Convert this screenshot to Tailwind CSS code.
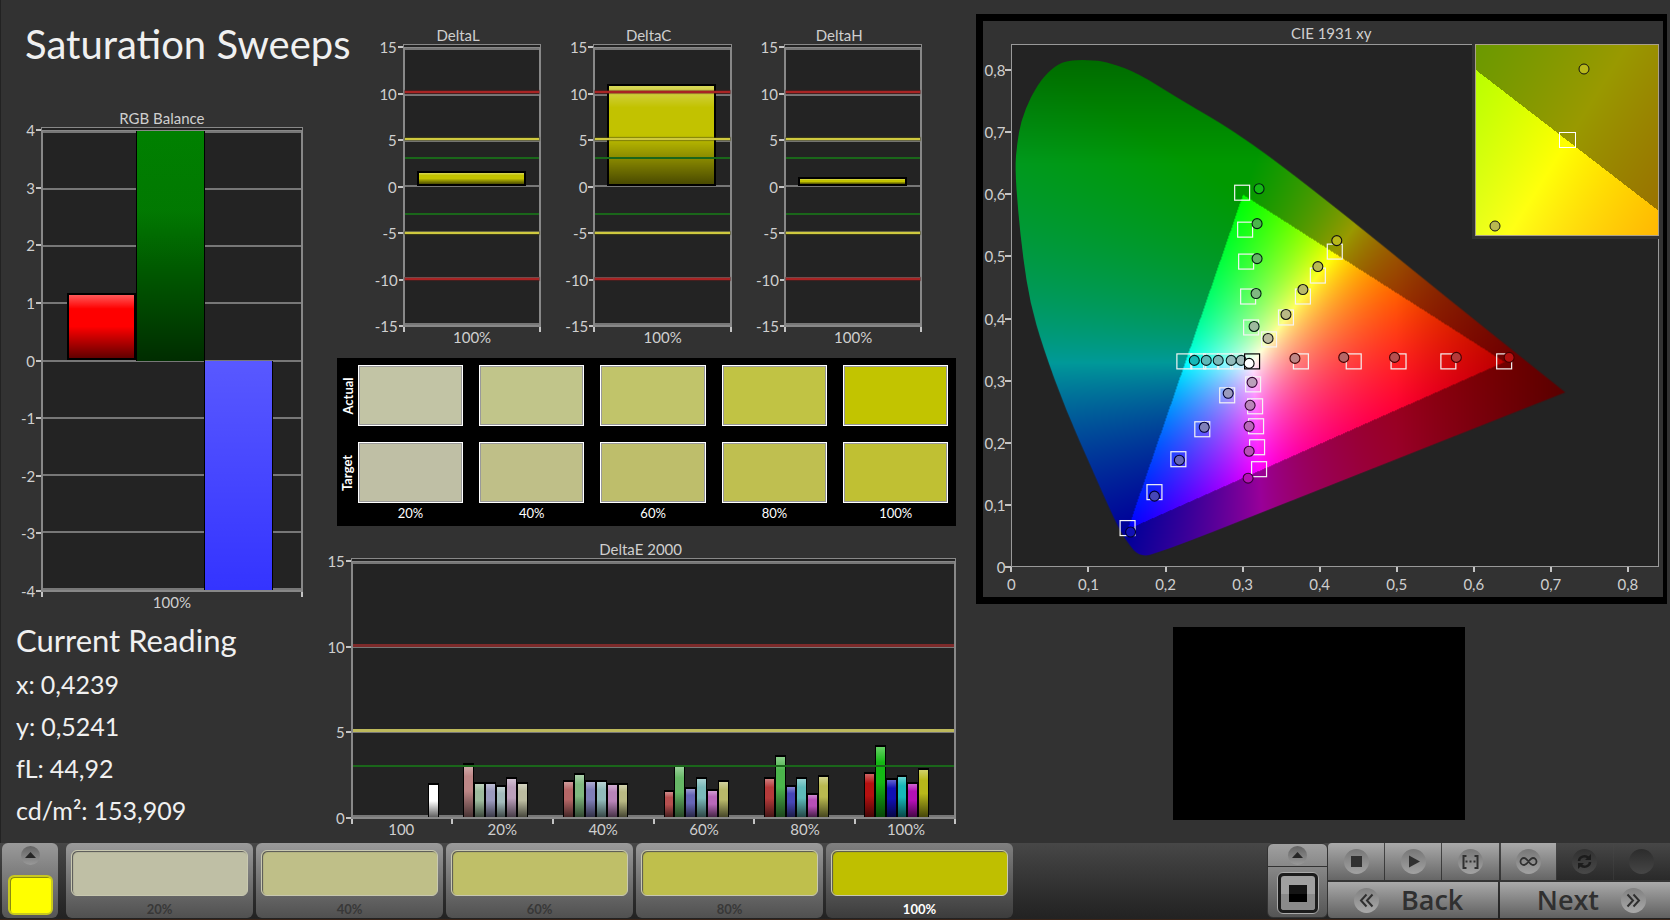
<!DOCTYPE html>
<html lang="en">

<head>
    <meta charset="UTF-8" />
    <meta name="viewport" content="width=device-width, initial-scale=1.0" />
    <title>Saturation Sweeps</title>
    <script src="https://cdn.jsdelivr.net/npm/@tailwindcss/browser@4"></script>
</head>

<body class="bg-[#323232] min-h-screen flex flex-col font-[Lato,sans-serif] text-[15px] leading-5 text-[#cfcfcf]">
    <main class="flex-1 grid grid-cols-[minmax(0,324fr)_minmax(0,632fr)_minmax(0,714fr)] border-l border-[#222]">

        <!-- left: title, rgb balance, reading -->
        <section class="flex flex-col">
            <h1 class="pt-[19px] pl-6 text-[40px] leading-[50px] text-[#f0f0f0] whitespace-nowrap">Saturation Sweeps</h1>
            <div class="mt-10 pl-5 pr-[22px]" id="rgbBalance"></div>
            <div class="pl-[15px] mt-2 text-[#f0f0f0]">
                <h2 class="text-[31px] leading-[38px]">Current Reading</h2>
                <dl class="mt-1 text-[25px] leading-[42px]">
                    <div class="flex gap-1.5"><dt>x:</dt><dd>0,4239</dd></div>
                    <div class="flex gap-1.5"><dt>y:</dt><dd>0,5241</dd></div>
                    <div class="flex gap-1.5"><dt>fL:</dt><dd>44,92</dd></div>
                    <div class="flex gap-1.5"><dt>cd/m²:</dt><dd>153,909</dd></div>
                </dl>
            </div>
        </section>

        <!-- middle: delta charts, swatches, deltaE -->
        <section class="flex flex-col">
            <div class="pt-[26px] pl-[50px] pr-[34px] grid grid-cols-3 gap-6">
                <div id="deltaL"></div>
                <div id="deltaC"></div>
                <div id="deltaH"></div>
            </div>

            <div class="mt-2.5 ml-3 bg-black pt-[7px] pr-2 pb-[3px] grid grid-cols-[21px_1fr] text-white text-[13px]">
                <div class="h-[61px] flex items-center justify-center"><span class="-rotate-90 font-bold">Actual</span></div>
                <div class="grid grid-cols-5 gap-4" id="actual"></div>
                <div class="h-[61px] mt-4 flex items-center justify-center"><span class="-rotate-90 font-bold">Target</span></div>
                <div class="grid grid-cols-5 gap-4 mt-4" id="target"></div>
                <div></div>
                <div class="grid grid-cols-5 gap-4 text-center">
                    <span>20%</span><span>40%</span><span>60%</span><span>80%</span><span>100%</span>
                </div>
            </div>

            <div class="mt-3.5" id="deltaE"></div>
        </section>

        <!-- right: chromaticity diagram -->
        <section class="flex flex-col pl-5 pr-[3px] pt-3.5">
            <div class="border-[7px] border-r-4 border-black pr-1">
                <h3 class="h-[23px] pt-0.5 pl-5 text-center">CIE 1931 xy</h3>
                <div class="grid grid-cols-[28px_1fr]">
                    <div class="pt-[26px] flex flex-col justify-between" id="cieY"></div>
                    <div class="relative h-[523px] bg-[#232323] border border-[#999]">
                        <canvas id="cie" width="648" height="522" class="w-full h-full"></canvas>
                        <svg id="marks" viewBox="0 0 648 522" preserveAspectRatio="none" class="absolute inset-0 w-full h-full"></svg>
                        <div class="absolute -top-px -right-px w-[187px] h-[195px] bg-[#323232] pl-[3px] pb-[3px]">
                            <div class="relative w-full h-full border border-[#aaa08a]">
                                <canvas id="inset" width="182" height="190" class="w-full h-full"></canvas>
                                <svg viewBox="0 0 182 190" class="absolute inset-0 w-full h-full">
                                    <rect x="83.5" y="87.5" width="16" height="15" fill="none" stroke="#fff" />
                                    <circle cx="108" cy="24" r="5" fill="#b8b81a" stroke="#111" />
                                    <circle cx="19" cy="181" r="5" fill="#b9b950" stroke="#111" />
                                </svg>
                            </div>
                        </div>
                    </div>
                </div>
                <div class="ml-[28px] pr-[31px] h-[30px] flex justify-between" id="cieX"></div>
            </div>
            <div class="mt-[23px] ml-[197px] w-[292px] h-[193px] bg-black"></div>
        </section>
    </main>

    <footer class="h-[77px] pl-0.5 pb-px flex bg-linear-to-b from-[#474747] to-[#222] border-b border-[#3a2418]">
        <div class="w-14 rounded-md bg-linear-to-b from-[#9a9a9a] to-[#555] flex flex-col items-center">
            <button aria-label="Expand colors" class="mt-[3px] w-[19px] h-[19px] rounded-full bg-linear-to-b from-[#636363] to-[#999]">
                <svg viewBox="0 0 19 19" class="w-full h-full"><path d="M4 12 9.500 6 15 12Z" fill="#262626" /></svg>
            </button>
            <button aria-label="Yellow" class="mt-2.5 w-[45px] h-10 rounded-md bg-[#ff0] border-2 border-[#c8c820] shadow-[inset_1px_1px_0_#8a8a10]"></button>
        </div>

        <div class="ml-2 flex gap-[3px]" id="steps"></div>

        <div class="ml-auto w-[61px] rounded-md bg-linear-to-b from-[#a0a0a0] to-[#555] border border-[#333] flex flex-col items-center">
            <button aria-label="Expand window" class="w-full h-[23px] flex justify-center items-center border-b border-[#333]">
                <svg viewBox="0 0 19 19" class="w-[19px] h-[19px] rounded-full bg-linear-to-b from-[#636363] to-[#999]"><path d="M4 12 9.500 6 15 12Z" fill="#262626" /></svg>
            </button>
            <button aria-label="Pattern window" class="mt-[5px] w-[42px] h-[42px] rounded-md border border-[#aaa] bg-[#1c1c1c] p-[3px]">
                <svg viewBox="0 0 34 34" class="w-full h-full"><rect width="34" height="34" rx="3" fill="#a0a0a0" /><path d="M0 18h34v13a3 3 0 0 1-3 3H3a3 3 0 0 1-3-3Z" fill="#8a8a8a" /><rect x="8" y="9" width="18" height="17" fill="#151515" /><rect x="8" y="18" width="18" height="8" fill="#000" /></svg>
            </button>
        </div>

        <div class="w-[342px] flex flex-col gap-0.5 text-[#303030]">
            <div class="grid grid-cols-6 gap-px h-[37px]">
                <button aria-label="Stop" class="rounded-tl bg-linear-to-b from-[#aaa] to-[#666] flex justify-center items-center">
                    <svg viewBox="0 0 25 25" class="w-[25px] h-[25px] rounded-full bg-linear-to-b from-[#777] to-[#a2a2a2]"><rect x="7" y="7" width="11" height="11" fill="currentColor" /></svg>
                </button>
                <button aria-label="Play" class="bg-linear-to-b from-[#aaa] to-[#666] flex justify-center items-center">
                    <svg viewBox="0 0 25 25" class="w-[25px] h-[25px] rounded-full bg-linear-to-b from-[#777] to-[#a2a2a2]"><path d="M8 6.500v12L19 12.500Z" fill="currentColor" /></svg>
                </button>
                <button aria-label="Range" class="bg-linear-to-b from-[#aaa] to-[#666] flex justify-center items-center">
                    <svg viewBox="0 0 25 25" class="w-[25px] h-[25px] rounded-full bg-linear-to-b from-[#777] to-[#a2a2a2]" fill="none" stroke="currentColor" stroke-width="2"><path d="M8.500 7H5.500v12h3M16.500 7h3v12h-3" /><path d="M7.500 12.500h10" stroke-dasharray="2 2" /></svg>
                </button>
                <button aria-label="Continuous" class="ml-px bg-linear-to-b from-[#aaa] to-[#666] flex justify-center items-center">
                    <svg viewBox="0 0 25 25" class="w-[25px] h-[25px] rounded-full bg-linear-to-b from-[#777] to-[#a2a2a2]" fill="none" stroke="currentColor" stroke-width="1.800"><path d="M12.500 12.500C10.500 10 9.500 9 8 9a3.500 3.500 0 0 0 0 7c1.500 0 2.500-1 4.500-3.500S15.500 9 17 9a3.500 3.500 0 0 1 0 7c-1.500 0-2.500-1-4.500-3.500Z" /></svg>
                </button>
                <button aria-label="Refresh" disabled class="bg-linear-to-b from-[#474747] to-[#2a2a2a] text-[#1c1c1c] flex justify-center items-center">
                    <svg viewBox="0 0 25 25" class="w-[25px] h-[25px] rounded-full bg-linear-to-b from-[#303030] to-[#484848]" fill="none" stroke="currentColor" stroke-width="2.500"><path d="M7 12c0-4 6-6.500 9.500-3M18 13c0 4-6 6.500-9.500 3" /><path d="M19 5v6h-6ZM6 20v-6h6Z" fill="currentColor" stroke="none" /></svg>
                </button>
                <button aria-label="Record" disabled class="bg-linear-to-b from-[#474747] to-[#2a2a2a] flex justify-center items-center">
                    <span class="w-[25px] h-[25px] rounded-full bg-linear-to-b from-[#2c2c2c] to-[#464646]"></span>
                </button>
            </div>
            <div class="flex-1 grid grid-cols-2 gap-0.5 font-['Open_Sans',sans-serif] font-semibold text-[27px]">
                <button class="rounded-bl bg-linear-to-b from-[#aaa] to-[#606060] flex items-center pl-[26px] gap-[22px]">
                    <svg viewBox="0 0 25 25" class="w-[25px] h-[25px] rounded-full bg-linear-to-b from-[#808080] to-[#aaa]" fill="none" stroke="currentColor" stroke-width="2"><path d="M12.500 6.500 7 12.500l5.500 6M18.500 6.500 13 12.500l5.500 6" /></svg>
                    Back
                </button>
                <button class="bg-linear-to-b from-[#aaa] to-[#606060] flex items-center justify-end pr-6 gap-[22px]">
                    Next
                    <svg viewBox="0 0 25 25" class="w-[25px] h-[25px] rounded-full bg-linear-to-b from-[#808080] to-[#aaa]" fill="none" stroke="currentColor" stroke-width="2"><path d="M6.500 6.500 12 12.500l-5.500 6M12.500 6.500 18 12.500l-5.500 6" /></svg>
                </button>
            </div>
        </div>
    </footer>

    <script>
        const $ = id => document.getElementById(id);

        // ---------- bar charts ----------
        const SHADE = 'linear-gradient(rgba(255,255,255,.35),rgba(255,255,255,0) 22%,rgba(0,0,0,0) 50%,rgba(0,0,0,.62))';
        const SHADE_GREEN = 'linear-gradient(rgba(0,0,0,0),rgba(20,30,20,.08) 35%,rgba(0,0,0,.3) 60%,rgba(0,0,0,.65))';
        const SHADE_BLUE = 'linear-gradient(rgba(255,255,255,.18),rgba(255,255,255,0))';

        const redLine = 'absolute inset-x-0 h-[2px] bg-[#a82424] shadow-[0_0_1px_1px_#6b1c1c88]';
        const yellowLine = 'absolute inset-x-0 h-[2px] bg-[#cfc93f] shadow-[0_0_1px_1px_#55551088]';
        const greenLine = 'absolute inset-x-0 h-[2px] bg-[#1a661a]';

        function chart(o) {
            const pct = v => (o.max - v) / (o.max - o.min) * 100;
            const labels = [];
            for (let v = o.max; v >= o.min; v -= o.step) labels.push(v);
            const bars = o.bars.map(b => {
                const top = pct(Math.min(o.max, Math.max(b.v, 0)));
                const bottom = pct(Math.max(o.min, Math.min(b.v, 0)));
                return `<div class="absolute border-black ${o.thin ? 'border-x border-t-2' : b.shade ? 'border-x' : 'border-2'}" style="left:${b.x}%;width:${b.w}%;top:${top}%;height:${bottom - top}%;background:${b.shade || SHADE} ${b.c}"></div>`;
            }).join('');
            const lines = (o.lines || []).map(([v, cls]) => `<div class="${cls}" style="top:${pct(v)}%"></div>`).join('');
            $(o.id).innerHTML = `
                <h3 class="h-[18px] leading-[18px] text-center">${o.title}</h3>
                <div class="grid ${o.axis}">
                    <div class="pt-[3px] pb-px flex flex-col justify-between">
                        ${labels.map(v => `<div class="h-0 flex items-center justify-end gap-px">${v}<i class="w-[5px] h-[2px] bg-[#c4c4c4]"></i></div>`).join('')}
                    </div>
                    <div class="relative bg-[#232323] border-2 border-t-4 border-[#888] [border-top-style:double] ${o.height}">
                        <div class="absolute inset-0 flex flex-col justify-between">
                            ${labels.map(() => '<div class="h-[2px] bg-[#777]"></div>').join('')}
                        </div>
                        ${bars}${lines}
                    </div>
                    <div></div>
                    <div class="flex justify-between">${'<i class="w-[2px] h-[5px] bg-[#c4c4c4]"></i>'.repeat(o.cats.length + 1)}</div>
                    <div></div>
                    <div class="flex h-4 leading-[10px]">${o.cats.map(c => `<span class="flex-1 text-center">${c}</span>`).join('')}</div>
                </div>`;
        }

        chart({
            id: 'rgbBalance', title: 'RGB Balance', axis: 'grid-cols-[20px_1fr]', height: 'h-[465px]',
            max: 4, min: -4, step: 1, cats: ['100%'],
            bars: [
                { x: 9.5, w: 26.7, v: 1.18, c: '#f00' },
                { x: 36, w: 26.7, v: 4, c: '#008000', shade: SHADE_GREEN },
                { x: 62.5, w: 26.7, v: -4, c: '#3434ff', shade: SHADE_BLUE },
            ],
        });

        const limits = [[10.3, redLine], [5.2, yellowLine], [3.2, greenLine], [-2.9, greenLine], [-4.9, yellowLine], [-9.9, redLine]];
        [['deltaL', 'DeltaL', 1.7], ['deltaC', 'DeltaC', 11.1], ['deltaH', 'DeltaH', 1]].forEach(([id, title, v]) => chart({
            id, title, axis: 'grid-cols-[28px_1fr]', height: 'h-[283px]',
            max: 15, min: -15, step: 5, cats: ['100%'], lines: limits,
            bars: [{ x: 9, w: 81, v, c: '#c2c200' }],
        }));

        // red, green, blue, cyan, magenta, yellow
        const tones = [
            ['#bd8686', '#9dba9d', '#9a9abd', '#a3bbbb', '#bba0bb', '#bbbba0'],
            ['#b56666', '#80b880', '#7f7fb8', '#92bbbb', '#b985b9', '#b9b984'],
            ['#b54f4f', '#66b766', '#6666b7', '#7bbaba', '#b968b9', '#b9b96a'],
            ['#b53a3a', '#4bb54b', '#4646b7', '#5ebaba', '#b74fb7', '#b9b950'],
            ['#b51010', '#14b814', '#1010b5', '#16b8b8', '#b510b5', '#b8b81a'],
        ];
        const errors = [
            [3.15, 2.07, 2.07, 1.86, 2.35, 2.07],
            [2.15, 2.56, 2.15, 2.15, 1.98, 1.98],
            [1.57, 3.05, 1.76, 2.33, 1.66, 2.15],
            [2.35, 3.66, 1.86, 2.33, 1.43, 2.49],
            [2.66, 4.21, 2.27, 2.49, 2.07, 2.9],
        ];
        const cat = 100 / 6, slot = cat * 0.108;
        const deBars = [{ x: cat * 0.1 + slot * 6, w: slot, v: 1.98, c: '#fff' }];
        errors.forEach((row, i) => row.forEach((v, j) =>
            deBars.push({ x: cat * (i + 1.1) + slot * j, w: slot, v, c: tones[i][j] })));
        chart({
            id: 'deltaE', title: 'DeltaE 2000', axis: 'grid-cols-[26px_1fr]', height: 'h-[261px]', thin: true,
            max: 15, min: 0, step: 5, cats: ['100', '20%', '40%', '60%', '80%', '100%'], bars: deBars,
            lines: [[10.2, 'absolute inset-x-0 h-[3px] bg-[#7d2a2a]'], [5.15, 'absolute inset-x-0 h-[3px] bg-[#bdb95c]'], [3.05, greenLine]],
        });

        // ---------- swatches ----------
        const actual = ['#c2c4a5', '#c1c58a', '#c1c46a', '#c1c344', '#c2c400'];
        const target = ['#bfbfa5', '#bfbf88', '#bebe6b', '#bfbf50', '#c0c033'];
        const swatch = c => `<div class="h-[61px] border border-white p-px" style="background:${c};box-shadow:inset 0 0 0 1px #999"></div>`;
        $('actual').innerHTML = actual.map(swatch).join('');
        $('target').innerHTML = target.map(swatch).join('');

        // ---------- step buttons ----------
        const stepColors = ['#bfbfa5', '#bfbf88', '#bfbf68', '#bfbf4c', '#bfbf00'];
        $('steps').innerHTML = stepColors.map((c, i) => `
            <button class="w-[187px] rounded-md bg-linear-to-b ${i == 4 ? 'from-[#808080] to-[#3c3c3c] text-white' : 'from-[#9a9a9a] to-[#505050] text-[#383838]'} px-[5px] pt-[7px] flex flex-col items-center font-bold text-[13px]">
                <span class="w-full h-[46px] rounded-md border border-[#c8c8b0] shadow-[inset_1px_1px_1px_#555]" style="background:${c}"></span>
                <span class="mt-[5px] leading-[17px]">${(i + 1) * 20}%</span>
            </button>`).join('');

        // ---------- CIE diagram ----------
        $('cieY').innerHTML = ['0,8', '0,7', '0,6', '0,5', '0,4', '0,3', '0,2', '0,1', '0'].map(t =>
            `<div class="h-0 flex items-center justify-end">${t}<i class="w-1.5 h-[2px] bg-[#c4c4c4]"></i></div>`).join('');
        $('cieX').innerHTML = ['0', '0,1', '0,2', '0,3', '0,4', '0,5', '0,6', '0,7', '0,8'].map(t =>
            `<div class="w-0 flex flex-col items-center"><i class="w-[2px] h-[5px] bg-[#c4c4c4]"></i><span class="mt-0.5">${t}</span></div>`).join('');

        function paint(canvas, x0, x1, y0, y1) {
            const ctx = canvas.getContext('2d');
            const { width: w, height: h } = canvas;
            const img = ctx.createImageData(w, h);
            for (let j = 0; j < h; j++) for (let i = 0; i < w; i++) {
                const x = x0 + (x1 - x0) * i / w;
                const y = Math.max(0.001, y1 - (y1 - y0) * j / h);
                const X = x / y, Z = (1 - x - y) / y;
                const rgb = [
                    3.2406 * X - 1.5372 - 0.4986 * Z,
                    -0.9689 * X + 1.8758 + 0.0415 * Z,
                    0.0557 * X - 0.2040 + 1.0570 * Z,
                ];
                const max = Math.max(...rgb);
                let k = Math.min(...rgb) < 0 ? 0.6 : 1;
                if (x > 0.5) k *= 1 - (x - 0.5) * 1.9;
                if (y > 0.65) k *= 1 - (y - 0.65) * 1.8;
                const p = (j * w + i) * 4;
                for (let c = 0; c < 3; c++) img.data[p + c] = 255 * k * Math.max(0, rgb[c] / max);
                img.data[p + 3] = 255;
            }
            ctx.putImageData(img, 0, 0);
            return ctx;
        }

        const locus = [[452, 266], [319, 158], [231, 91], [166, 53], [126, 28], [99, 18], [82, 15], [59, 15], [46, 19], [32, 31],
            [19, 51], [9, 76], [5, 99], [3, 123], [6, 166], [11, 213], [18, 258], [31, 303], [54, 366], [82, 429], [106, 483],
            [119, 503], [127, 511], [141, 512], [319, 441]];
        const ctx = paint($('cie'), 0, 0.8405, 0, 0.8405);
        ctx.globalCompositeOperation = 'destination-in';
        ctx.beginPath();
        ctx.moveTo(555, 348);
        for (let i = 0; i < locus.length - 1; i++) {
            const [a, b] = locus[i], [c, d] = locus[i + 1];
            ctx.quadraticCurveTo(a, b, (a + c) / 2, (b + d) / 2);
        }
        ctx.closePath();
        ctx.fill();
        paint($('inset'), 0.3955, 0.4431, 0.4797, 0.5309);

        // [targets, readings] from 20% to 100%
        const series = [
            [[[290, 317], [343, 317], [388, 317], [438, 317], [494, 317]], [[284, 314], [333, 313], [384, 313], [446, 313], [499, 313]]],
            [[[240, 283], [237, 252], [235, 217], [234, 185], [231, 148]], [[243, 282], [245, 249], [246, 214], [246, 179], [248, 144]]],
            [[[216, 351], [191, 385], [167, 415], [143, 448], [116, 484]], [[217, 349], [193, 383], [168, 416], [143, 452], [119, 488]]],
            [[[227, 317], [214, 317], [200, 317], [187, 317], [173, 317]], [[230, 316], [220, 316], [207, 316], [195, 316], [183, 316]]],
            [[[242, 340], [244, 362], [245, 382], [246, 403], [248, 425]], [[241, 338], [239, 361], [238, 382], [238, 407], [237, 434]]],
            [[[258, 295], [275, 273], [292, 252], [307, 231], [324, 207]], [[257, 294], [275, 270], [292, 245], [307, 222], [326, 196]]],
        ];
        const edges = ['#400', '#021', '#003', '#022', '#303', '#111'];
        const box = (x, y, c) => `<rect x="${x - 7.5}" y="${y - 7.5}" width="15" height="15" fill="none" stroke="${c}" stroke-width="1.2"/>`;
        const dot = (x, y, c, s) => `<circle cx="${x}" cy="${y}" r="5" fill="${c}" stroke="${s}" stroke-width="1.1"/>`;
        $('marks').innerHTML =
            series.map(s => s[0].map(([x, y]) => box(x, y, '#f4f4f4')).join('')).join('') +
            series.map((s, k) => s[1].map(([x, y], i) => dot(x, y, tones[i][k], edges[k])).join('')).join('') +
            box(241, 317, '#000') + dot(238, 319, '#fff', '#000');
    </script>
</body>

</html>
